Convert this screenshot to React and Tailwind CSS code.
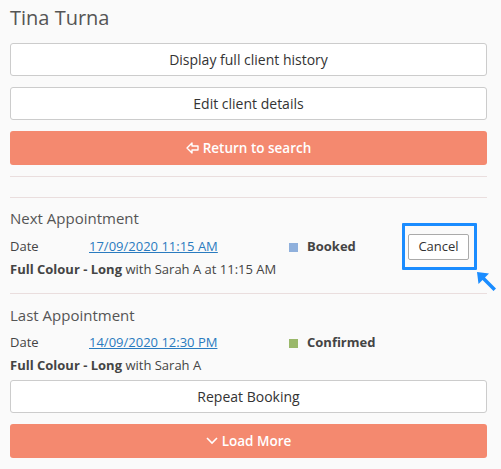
const font = { fontFamily: '"Open Sans", "Liberation Sans", sans-serif' };

const WhiteButton = ({ children, className = '' }) => (
    <button className={`w-full h-[33px] bg-white border border-[#cccccc] rounded-[3px] text-[14px] text-[#333] ${className}`}>
        {children}
    </button>
);

const OrangeButton = ({ children, className = '' }) => (
    <button className={`w-full h-[34px] bg-[#f4896f] rounded-[3px] text-[13.5px] font-semibold text-white flex items-center justify-center gap-1 ${className}`}>
        {children}
    </button>
);

const App = () => {
    return (
        <div className="w-[501px] h-[469px] bg-[#fafafa] overflow-hidden" style={font}>
            <div className="pl-[10px] pr-[14px] pt-[6px]">
                <h1 className="text-[20px] leading-[24px] text-[#555]">Tina Turna</h1>

                <WhiteButton className="mt-[13px]">Display full client history</WhiteButton>
                <WhiteButton className="mt-[11px]">Edit client details</WhiteButton>
                <OrangeButton className="mt-[11px]">
                    {/* outlined left arrow */}
                    <svg width="13" height="12" viewBox="0 0 13 12" fill="none" stroke="white" strokeWidth="1.4" strokeLinejoin="round">
                        <path d="M1 6 L6 1 V4 H12 V8 H6 V11 Z" />
                    </svg>
                    Return to search
                </OrangeButton>

                <div className="mt-[11px] border-t border-[#eadede]" />
                <div className="mt-[20px] border-t border-[#eadede]" />

                {/* Next appointment */}
                <h2 className="mt-[10px] text-[15px] leading-[20px] text-[#555]">Next Appointment</h2>
                <div className="mt-[6px] flex items-center h-[26px] text-[13px] text-[#444]">
                    <span className="w-[79px]">Date</span>
                    <a href="#" className="w-[200px] text-[#2a7bbf] underline">17/09/2020 11:15 AM</a>
                    <span className="w-[9px] h-[9px] bg-[#8fb0dc] mr-[9px]" />
                    <span className="font-bold">Booked</span>
                    <span className="relative ml-auto mr-[18px]">
                        <button className="w-[61px] h-[26px] bg-white border border-[#aaaaaa] rounded-[2px] text-[13px] text-[#333]">Cancel</button>
                        <span className="absolute -left-[6px] -right-[8px] -top-[11px] -bottom-[10px] border-[3px] border-[#1a8cff] rounded-[1px]" />
                        <svg className="absolute left-[68px] top-[37px]" width="22" height="22" viewBox="0 0 22 22">
                            <path d="M1 1 L13 2.5 L9 6.5 L20 17.5 L17.5 20 L6.5 9 L2.5 13 Z" fill="#1a8cff" />
                        </svg>
                    </span>
                </div>
                <p className="h-[18px] leading-[18px] text-[13px] text-[#444]">
                    <span className="font-bold">Full Colour - Long</span> with Sarah A at 11:15 AM
                </p>

                <div className="mt-[15px] border-t border-[#eadede]" />

                {/* Last appointment */}
                <h2 className="mt-[11px] text-[15px] leading-[20px] text-[#555]">Last Appointment</h2>
                <div className="mt-[9px] flex items-center h-[18px] text-[13px] text-[#444]">
                    <span className="w-[79px]">Date</span>
                    <a href="#" className="w-[200px] text-[#2a7bbf] underline">14/09/2020 12:30 PM</a>
                    <span className="w-[9px] h-[9px] bg-[#9ab86a] mr-[9px]" />
                    <span className="font-bold">Confirmed</span>
                </div>
                <p className="mt-[4px] h-[18px] leading-[18px] text-[13px] text-[#444]">
                    <span className="font-bold">Full Colour - Long</span> with Sarah A
                </p>

                <WhiteButton className="mt-[6px] h-[32px]">Repeat Booking</WhiteButton>
                <OrangeButton className="mt-[11px] h-[33px]">
                    <svg width="12" height="8" viewBox="0 0 12 8" fill="none" stroke="white" strokeWidth="1.6">
                        <path d="M1 1 L6 6 L11 1" />
                    </svg>
                    Load More
                </OrangeButton>
            </div>
        </div>
    );
};

export default App;
